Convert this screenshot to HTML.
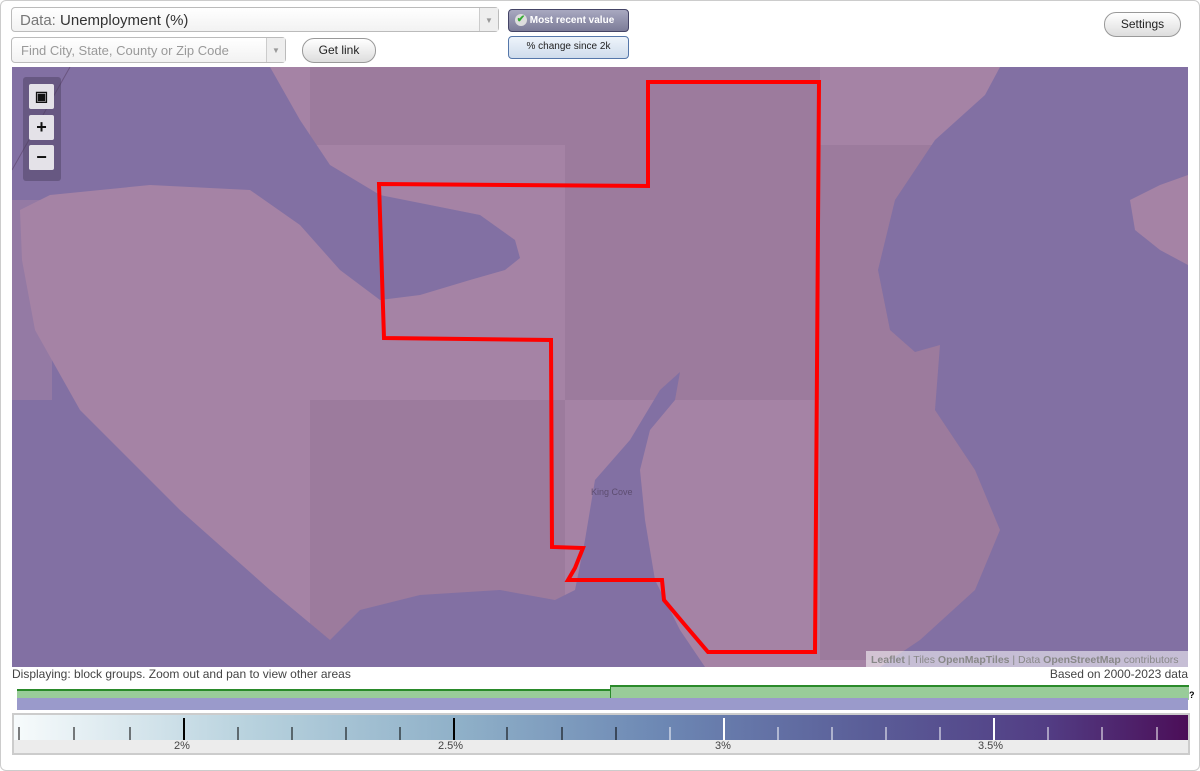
<!DOCTYPE html>
<html><head><meta charset="utf-8"><style>
body{margin:0;width:1200px;height:771px;background:#fff;font-family:"Liberation Sans",sans-serif;position:relative;overflow:hidden}
.frame{position:absolute;left:0;top:0;width:1198px;height:769px;border:1px solid #ccc;border-radius:6px}
.sel{position:absolute;border:1px solid #bbb;border-radius:4px;background:linear-gradient(#fff,#f2f2f2);color:#333}
.arrow{position:absolute;right:0;top:0;bottom:0;width:18px;border-left:1px solid #ccc;background:#eee;color:#999;font-size:8px;text-align:center}
.btn{position:absolute;border:1px solid #999;border-radius:12px;background:linear-gradient(#fff,#ddd);font-size:12px;text-align:center;color:#222}
.ctl{position:absolute;left:23px;top:77px;width:38px;height:104px;background:rgba(70,60,90,.45);border-radius:3px}
.ctl div{position:absolute;left:6px;width:25px;height:25px;background:#e4e2e8;border-radius:2px;font-weight:bold;text-align:center;font-size:18px;line-height:24px;color:#111}
</style></head><body>
<div class="frame"></div>
<div class="sel" style="left:11px;top:7px;width:488px;height:25px;font-size:15px;line-height:25px;padding-left:8px;box-sizing:border-box"><span style="color:#777">Data:</span> Unemployment (%)<div class="arrow" style="line-height:25px">▼</div></div>
<div class="sel" style="left:11px;top:37px;width:275px;height:26px;font-size:13px;line-height:26px;padding-left:9px;box-sizing:border-box;color:#999">Find City, State, County or Zip Code<div class="arrow" style="line-height:26px">▼</div></div>
<div class="btn" style="left:302px;top:38px;width:72px;height:23px;line-height:23px">Get link</div>
<div style="position:absolute;left:508px;top:9px;width:121px;height:23px;border:1px solid #446;border-radius:4px;background:linear-gradient(#a8a8c0,#7c7c98);color:#fff;font-size:10px;font-weight:bold;line-height:21px;text-align:left;box-sizing:border-box;padding-left:6px"><span style="display:inline-block;width:12px;height:12px;border-radius:6px;background:#ddd;color:#3a3;font-size:10px;line-height:12px;text-align:center;vertical-align:middle">✔</span> Most recent value</div>
<div style="position:absolute;left:508px;top:36px;width:121px;height:23px;border:1px solid #5577aa;border-radius:4px;background:linear-gradient(#eef4fb,#cfdcec);color:#222;font-size:10px;line-height:20px;text-align:center;box-sizing:border-box">% change since 2k</div>
<div class="btn" style="left:1104px;top:12px;width:75px;height:23px;line-height:23px">Settings</div>

<svg style="position:absolute;left:12px;top:67px" width="1176" height="600" viewBox="12 67 1176 600">
<defs><clipPath id="land"><polygon id="lp" points="270,67 300,120 330,165 380,195 430,205 480,215 515,240 520,258 505,270 470,280 420,295 380,300 340,270 300,225 250,190 150,185 50,195 20,210 22,260 35,330 80,410 180,510 270,590 330,640 360,610 420,595 500,590 555,600 575,590 585,540 595,480 630,440 660,390 680,372 675,400 650,430 640,470 645,520 655,580 680,630 705,667 880,667 920,640 975,590 1000,530 975,470 935,410 940,345 915,352 890,330 878,270 895,200 935,140 985,95 1000,67"/></clipPath></defs>
<rect x="12" y="67" width="1176" height="600" fill="#8270a3"/>
<use href="#lp" fill="#a583a5"/>
<polygon fill="#a583a5" points="1130,200 1160,185 1188,175 1188,265 1160,250 1135,230"/>
<rect x="12" y="200" width="40" height="200" fill="rgba(165,131,165,0.5)"/>
<g fill="rgba(70,40,80,0.09)" clip-path="url(#land)">
<rect x="310" y="67" width="255" height="78"/>
<rect x="565" y="67" width="255" height="333"/>
<rect x="820" y="145" width="258" height="515"/>
<rect x="310" y="400" width="255" height="267"/>
</g>
<polyline fill="none" stroke="#6a5580" stroke-width="1" points="12,170 70,67"/>
<text x="591" y="495" font-size="9" fill="#5d4d70" font-family="Liberation Sans">King Cove</text>
<polygon fill="none" stroke="#f00" stroke-width="4" stroke-linejoin="miter" points="648,82 819,82 815,652 708,652 685,625 664,600 662,580 568,580 575,568 583,548 552,547 551,340 384,338 379,184 648,186"/>
<rect x="866" y="651" width="322" height="16" fill="rgba(255,255,255,.55)"/>
<text x="871" y="663" font-size="10.5" fill="#888" font-family="Liberation Sans"><tspan font-weight="bold">Leaflet</tspan> | Tiles <tspan font-weight="bold">OpenMapTiles</tspan> | Data <tspan font-weight="bold">OpenStreetMap</tspan> contributors</text>
</svg>
<div class="ctl"><div style="top:7px;font-size:14px">▣</div><div style="top:38px">+</div><div style="top:68px">−</div></div>

<div style="position:absolute;left:12px;top:667px;font-size:12px;color:#444">Displaying: block groups. Zoom out and pan to view other areas</div>
<div style="position:absolute;right:12px;top:667px;font-size:12px;color:#444">Based on 2000-2023 data</div>
<div style="position:absolute;left:17px;top:689px;width:593px;height:9px;background:#9c9;border-top:2px solid #2a8a2a"></div>
<div style="position:absolute;left:610px;top:685px;width:578px;height:13px;background:#9c9;border-top:2px solid #2a8a2a;border-left:1px solid #2a8a2a"></div>
<div style="position:absolute;left:1189px;top:690px;font-size:9px;font-weight:bold">?</div>
<div style="position:absolute;left:17px;top:698px;width:1171px;height:12px;background:#9a9acb"></div>
<div style="position:absolute;left:12px;top:713px;width:1178px;height:42px;border:2px solid #ccc;box-sizing:border-box;background:#ececec"></div>
<div style="position:absolute;left:14px;top:715px;width:1174px;height:25px;background:linear-gradient(90deg,#f7fbfc,#b8d2de 20%,#8fb0c8 38%,#6d88b4 55%,#5b5f99 72%,#523d84 88%,#4b0e58)"></div>
<svg style="position:absolute;left:0;top:715px" width="1200" height="25">
<g stroke-width="1">
<line x1="19" y1="12" x2="19" y2="25" stroke="#000"/><line x1="74" y1="12" x2="74" y2="25" stroke="#000"/><line x1="130" y1="12" x2="130" y2="25" stroke="#000"/><line x1="184" y1="3" x2="184" y2="25" stroke="#000" stroke-width="2"/><line x1="238" y1="12" x2="238" y2="25" stroke="#000"/><line x1="292" y1="12" x2="292" y2="25" stroke="#000"/><line x1="346" y1="12" x2="346" y2="25" stroke="#000"/><line x1="400" y1="12" x2="400" y2="25" stroke="#000"/><line x1="454" y1="3" x2="454" y2="25" stroke="#000" stroke-width="2"/><line x1="507" y1="12" x2="507" y2="25" stroke="#000"/><line x1="562" y1="12" x2="562" y2="25" stroke="#000"/><line x1="616" y1="12" x2="616" y2="25" stroke="#000"/>
<line x1="670" y1="12" x2="670" y2="25" stroke="#fff"/><line x1="724" y1="3" x2="724" y2="25" stroke="#fff" stroke-width="2"/><line x1="778" y1="12" x2="778" y2="25" stroke="#fff"/><line x1="832" y1="12" x2="832" y2="25" stroke="#fff"/><line x1="886" y1="12" x2="886" y2="25" stroke="#fff"/><line x1="940" y1="12" x2="940" y2="25" stroke="#fff"/><line x1="994" y1="3" x2="994" y2="25" stroke="#fff" stroke-width="2"/><line x1="1048" y1="12" x2="1048" y2="25" stroke="#fff"/><line x1="1102" y1="12" x2="1102" y2="25" stroke="#fff"/><line x1="1157" y1="12" x2="1157" y2="25" stroke="#fff"/>
</g></svg>
<div style="position:absolute;top:740px;left:0;width:1200px;font-size:11px;color:#444">
<span style="position:absolute;left:174px">2%</span><span style="position:absolute;left:438px">2.5%</span><span style="position:absolute;left:715px">3%</span><span style="position:absolute;left:978px">3.5%</span></div>
</body></html>
